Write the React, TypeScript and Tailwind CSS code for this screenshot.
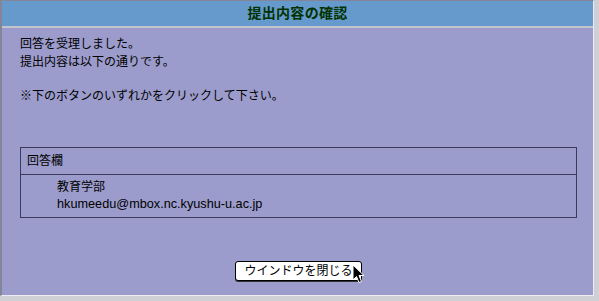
import React from 'react';

const jp = { fontFamily: '"Liberation Sans", "Noto Sans CJK JP", sans-serif' };

// マウスカーソル（スクリーンショットに写り込んだもの）
const Cursor = () => (
  <svg
    className="absolute left-[352px] top-[264px]"
    width="13"
    height="20"
    viewBox="0 0 13 20"
  >
    <path
      d="M1 1 L1 16 L4.5 12.5 L7 18.5 L9.5 17.5 L7 11.5 L12 11.5 Z"
      fill="#000"
      stroke="#fff"
      strokeWidth="1"
      strokeLinejoin="round"
    />
  </svg>
);

const App: React.FC = () => {
  return (
    <div className="relative w-[599px] h-[301px] overflow-hidden bg-[#cfcfd6]" style={jp}>
      <div className="flex flex-col w-[594px] h-[296px] border-l-2 border-t border-[#85859a] border-r border-b border-r-[#ececf2] border-b-[#ececf2]">
        {/* タイトル */}
        <div className="h-[27px] shrink-0 bg-[#6699cc] flex items-center justify-center border-b-2 border-b-[#c4c4cc]">
          <h1 className="text-[14px] font-bold text-[#003300] tracking-[0.3px]">提出内容の確認</h1>
        </div>

        {/* 本文 */}
        <div className="flex-1 bg-[#9c9ccc] pl-[18px] pr-[16px] pt-[7px] text-[12px] leading-[18px] text-black">
          <p>回答を受理しました。</p>
          <p>提出内容は以下の通りです。</p>
          <p className="mt-[16px]">※下のボタンのいずれかをクリックして下さい。</p>

          <div className="mt-[42px] border border-[#3a3a5a] leading-[17px]">
            <div className="h-[27px] flex items-center px-[6px] border-b border-[#3a3a5a]">回答欄</div>
            <div className="pl-[36px] pt-[4px] pb-[4px]">
              <p>教育学部</p>
              <p className="text-[12.7px]">hkumeedu@mbox.nc.kyushu-u.ac.jp</p>
            </div>
          </div>

          <div className="flex justify-center mt-[43px]">
            <button className="w-[127px] h-[20px] bg-white border border-black rounded-[3px] shadow-[0_1px_0_#333] text-[12px] leading-none text-black">
              ウインドウを閉じる
            </button>
          </div>
        </div>
      </div>
      <Cursor />
    </div>
  );
};

export default App;
